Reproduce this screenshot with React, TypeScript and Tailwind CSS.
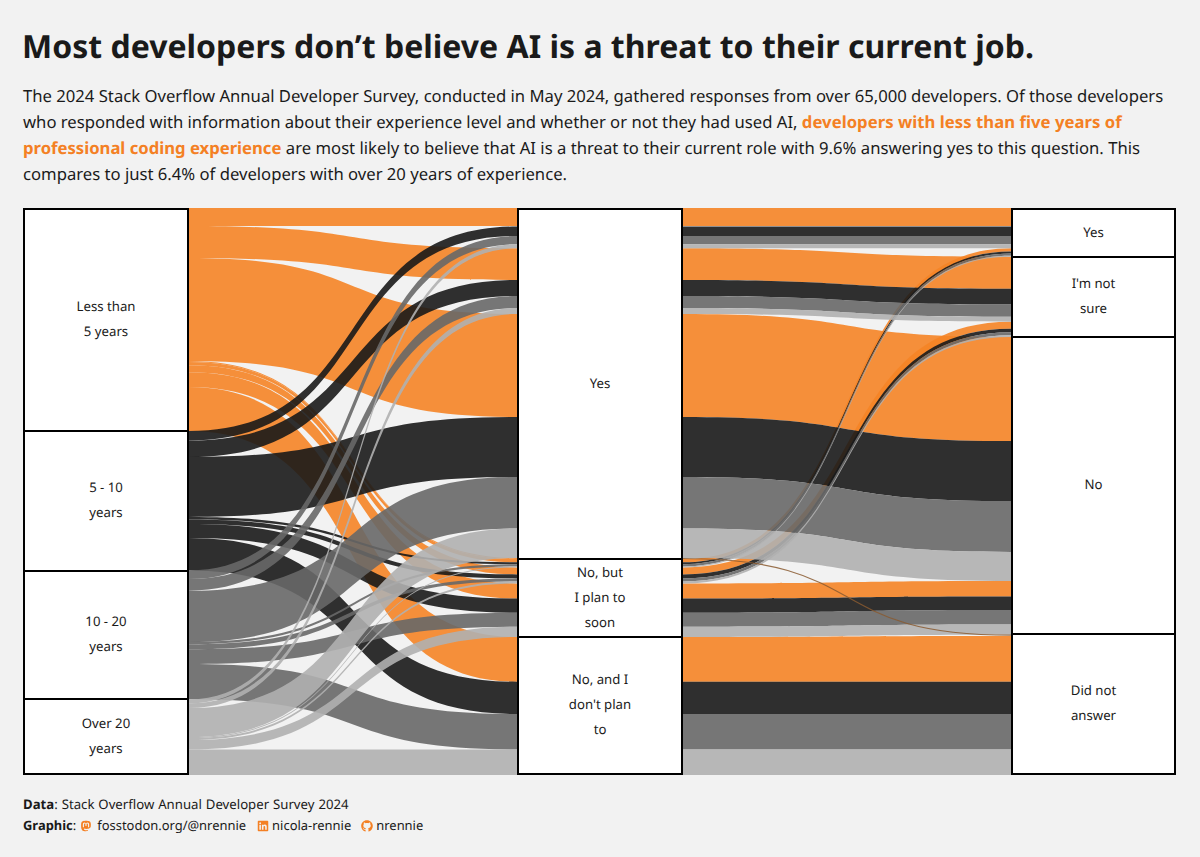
import { FaGithub, FaLinkedin, FaMastodon } from "react-icons/fa6";

const ORANGE = "#F58426";
const DARK = "#1A1A1A";
const GRAY = "#686868";
const LIGHT = "#B0B0B0";

type Flow = [string, number, number, number, number];

// [colour, left top, left bottom, right top, right bottom] in page pixels
const leftFlows: Flow[] = [
  [ORANGE, 208, 226, 208, 226],
  [ORANGE, 226, 258, 248.3, 280],
  [ORANGE, 258, 361, 314, 417],
  [ORANGE, 361, 362, 558, 559],
  [ORANGE, 362, 365.3, 559, 562.3],
  [ORANGE, 365.3, 372.3, 567.4, 574.4],
  [ORANGE, 372.3, 387, 583.4, 598.6],
  [ORANGE, 387, 431, 637, 681.7],
  [DARK, 431, 440.5, 226.5, 236],
  [DARK, 440.5, 457, 280, 296],
  [DARK, 457, 517, 417, 477],
  [DARK, 517, 519.5, 562.3, 564.2],
  [DARK, 519.5, 524, 574.4, 578.4],
  [DARK, 524, 538, 598.6, 612.7],
  [DARK, 538, 570.4, 681.7, 714],
  [GRAY, 570.4, 579, 236, 244.3],
  [GRAY, 579, 590.7, 296, 308],
  [GRAY, 590.7, 642, 477, 528.5],
  [GRAY, 642, 644.2, 564.2, 566.4],
  [GRAY, 644.2, 649.3, 578.4, 581.4],
  [GRAY, 649.3, 664, 612.7, 626.7],
  [GRAY, 664, 699.3, 714, 749.5],
  [LIGHT, 699.3, 703.3, 244.3, 248.3],
  [LIGHT, 703.3, 708, 308, 314],
  [LIGHT, 708, 737, 528.5, 558],
  [LIGHT, 737, 738, 566.4, 567.4],
  [LIGHT, 738, 740, 581.4, 583.4],
  [LIGHT, 740, 749.5, 626.7, 637],
  [LIGHT, 749.5, 775, 749.5, 775],
];

const rightFlows: Flow[] = [
  [ORANGE, 208, 226, 208, 226],
  [ORANGE, 248.3, 280, 256.7, 288.7],
  [ORANGE, 314, 417, 337, 441],
  [ORANGE, 559, 562.3, 248.3, 251.6],
  [ORANGE, 567.4, 574.4, 321.7, 328.7],
  [ORANGE, 583.4, 598.6, 581, 596.6],
  [ORANGE, 637, 681.7, 636, 681.7],
  [DARK, 226.5, 236, 226.5, 236],
  [DARK, 280, 296, 288.7, 304.4],
  [DARK, 417, 477, 441, 501],
  [DARK, 562.3, 564.2, 251.6, 253.5],
  [DARK, 574.4, 578.4, 328.7, 332.2],
  [DARK, 598.6, 612.7, 596.6, 610],
  [DARK, 681.7, 714, 681.7, 714],
  [GRAY, 236, 244.3, 236, 244.3],
  [GRAY, 296, 308, 304.4, 316.7],
  [GRAY, 477, 528.5, 501, 552],
  [GRAY, 564.2, 566.4, 253.5, 255.7],
  [GRAY, 578.4, 581.4, 332.2, 335.2],
  [GRAY, 612.7, 626.7, 610, 624.5],
  [GRAY, 714, 749.5, 714, 749.5],
  [LIGHT, 244.3, 248.3, 244.3, 248.3],
  [LIGHT, 308, 314, 316.7, 321.7],
  [LIGHT, 528.5, 558, 552, 581],
  [LIGHT, 566.4, 567.4, 255.7, 256.7],
  [LIGHT, 581.4, 583.4, 335.2, 337],
  [LIGHT, 626.7, 637, 624.5, 634.8],
  [LIGHT, 749.5, 775, 749.5, 775],
];

const W = 328;
const TOP = 208;
const BEND = W * 0.58;

function flowPath([, a, b, c, d]: Flow) {
  const [y0, y1, y2, y3] = [a - TOP, b - TOP, c - TOP, d - TOP];
  return (
    `M0 ${y0}C${BEND} ${y0} ${W - BEND} ${y2} ${W} ${y2}` +
    `L${W} ${y3}C${W - BEND} ${y3} ${BEND} ${y1} 0 ${y1}Z`
  );
}

function Flows({ flows, thread }: { flows: Flow[]; thread?: boolean }) {
  return (
    <svg width={W} height={567} viewBox={`0 0 ${W} 567`} className="block shrink-0">
      {flows.map((f, i) => (
        <path key={i} d={flowPath(f)} fill={f[0]} fillOpacity={0.9} />
      ))}
      {/* the one very thin Yes -> Did not answer flow */}
      {thread && (
        <path
          d={`M0 ${558.5 - TOP}C${BEND} ${558.5 - TOP} ${W - BEND} ${635.2 - TOP} ${W} ${635.2 - TOP}`}
          fill="none"
          stroke="#8A5A30"
          strokeWidth={1.2}
          strokeOpacity={0.85}
        />
      )}
    </svg>
  );
}

function Stratum({ height, lines, last }: { height: string; lines: string[]; last?: boolean }) {
  return (
    <div
      className={`flex flex-col items-center justify-center border-x-2 border-t-2 border-black bg-white pb-[2px] text-[13.2px] leading-[25px] text-[#1a1a1a] ${height} ${
        last ? "border-b-2" : ""
      }`}
    >
      {lines.map((l) => (
        <span key={l}>{l}</span>
      ))}
    </div>
  );
}

export default function App() {
  return (
    <div className="h-[857px] w-[1200px] overflow-hidden bg-[#F2F2F2] pl-[23px] text-[#1a1a1a] [font-family:'Noto_Sans',sans-serif] [text-rendering:geometricPrecision]">
      <h1 className="-ml-px pt-[24px] text-[32px] leading-[46px] font-bold whitespace-nowrap">
        Most developers don’t believe AI is a threat to their current job.
      </h1>
      <div className="mt-[13px] text-[16.67px] leading-[26px] whitespace-nowrap">
        <p>
          The 2024 Stack Overflow Annual Developer Survey, conducted in May 2024, gathered responses from over 65,000 developers. Of those developers
        </p>
        <p>
          who responded with information about their experience level and whether or not they had used AI,{" "}
          <span className="font-bold tracking-[0.05px] text-[#F48024]">developers with less than five years of</span>
        </p>
        <p className="[word-spacing:0.06px]">
          <span className="font-bold text-[#F48024]">professional coding experience</span> are most likely to believe that AI is a threat to their current role with 9.6% answering yes to this question. This
        </p>
        <p>compares to just 6.4% of developers with over 20 years of experience.</p>
      </div>

      <div className="mt-[21px] flex h-[567px]">
        <div className="flex w-[166px] shrink-0 flex-col">
          <Stratum height="h-[222px]" lines={["Less than", "5 years"]} />
          <Stratum height="h-[140px]" lines={["5 - 10", "years"]} />
          <Stratum height="h-[128px]" lines={["10 - 20", "years"]} />
          <Stratum height="h-[77px]" lines={["Over 20", "years"]} last />
        </div>
        <Flows flows={leftFlows} />
        <div className="flex w-[166px] shrink-0 flex-col">
          <Stratum height="h-[350px]" lines={["Yes"]} />
          <Stratum height="h-[78px]" lines={["No, but", "I plan to", "soon"]} />
          <Stratum height="h-[139px]" lines={["No, and I", "don't plan", "to"]} last />
        </div>
        <Flows flows={rightFlows} thread />
        <div className="flex w-[165px] shrink-0 flex-col">
          <Stratum height="h-[48px]" lines={["Yes"]} />
          <Stratum height="h-[80px]" lines={["I'm not", "sure"]} />
          <Stratum height="h-[297px]" lines={["No"]} />
          <Stratum height="h-[142px]" lines={["Did not", "answer"]} last />
        </div>
      </div>

      <div className="mt-[19px] text-[13.2px] leading-[21px] whitespace-nowrap">
        <p className="[word-spacing:0.5px]">
          <b>Data</b>: Stack Overflow Annual Developer Survey 2024
        </p>
        <p className="flex items-center text-[12.95px]">
          <b>Graphic</b>:
          <FaMastodon className="mr-[5px] ml-[4px] text-[12px] text-[#F48024]" />
          fosstodon.org/@nrennie
          <FaLinkedin className="mr-[3px] ml-[11px] text-[12px] text-[#F48024]" />
          nicola-rennie
          <FaGithub className="mr-[3px] ml-[10px] text-[12px] text-[#F48024]" />
          nrennie
        </p>
      </div>
    </div>
  );
}
